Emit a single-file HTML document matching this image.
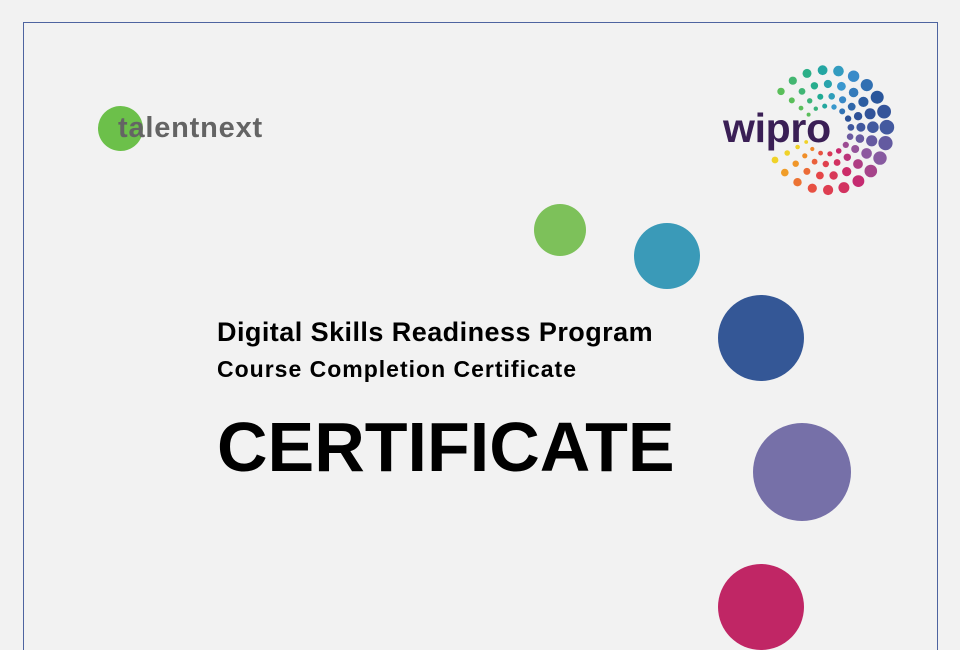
<!DOCTYPE html>
<html><head><meta charset="utf-8"><style>
html,body{margin:0;padding:0;width:960px;height:650px;overflow:hidden}
body{background:#f2f2f2;position:relative;font-family:"Liberation Sans",sans-serif}
.frame{position:absolute;left:23px;top:22px;width:915px;height:640px;border:1.5px solid #4e64a0;box-sizing:border-box}
.t{position:absolute;left:217px;font-weight:bold;color:#000;white-space:nowrap;line-height:1}
.c{position:absolute;border-radius:50%}
</style></head><body>
<div class="frame"></div>
<div class="c" style="left:98px;top:106px;width:45px;height:45px;background:#6cc04a"></div>
<div style="position:absolute;left:118px;top:114px;font-size:29px;font-weight:bold;color:#646464;letter-spacing:0.8px;line-height:1">talentnext</div>
<svg id="w" width="960" height="650" style="position:absolute;left:0;top:0"></svg>
<div style="position:absolute;left:723px;top:108px;font-size:41px;font-weight:bold;color:#3a1f55;line-height:1;letter-spacing:-0.3px">wipro</div>
<div class="c" style="left:534px;top:204px;width:52px;height:52px;background:#7dc15a"></div>
<div class="c" style="left:634px;top:223px;width:66px;height:66px;background:#3a9ab8"></div>
<div class="c" style="left:718px;top:295px;width:86px;height:86px;background:#345796"></div>
<div class="c" style="left:753px;top:423px;width:98px;height:98px;background:#7670a8"></div>
<div class="c" style="left:718px;top:564px;width:86px;height:86px;background:#c02665"></div>
<div class="t" style="top:319px;font-size:27px;letter-spacing:0.45px">Digital Skills Readiness Program</div>
<div class="t" style="top:358px;font-size:23px;letter-spacing:1px">Course Completion Certificate</div>
<div class="t" style="top:412px;font-size:70px">CERTIFICATE</div>
<script>
var s=document.getElementById('w'),cx=827,cy=130;
var rings=[[60,20,1.1],[46,18,0.85],[34,16,0.62],[24,14,0.45]];
var stops=[[140,[90,190,90]],[100,[30,170,150]],[70,[60,150,210]],[30,[40,80,150]],[0,[70,90,160]],[-30,[140,90,160]],[-60,[200,40,110]],[-100,[230,70,70]],[-130,[240,140,40]],[-150,[240,210,40]]];
function col(a){for(var i=0;i<stops.length-1;i++){var A=stops[i],B=stops[i+1];if(a<=A[0]&&a>=B[0]){var t=(A[0]-a)/(A[0]-B[0]);return 'rgb('+A[1].map(function(v,k){return Math.round(v+(B[1][k]-v)*t)}).join(',')+')';}}return 'rgb(240,210,40)';}
var h='';
rings.forEach(function(r){for(var i=0;i<r[1];i++){var a=140-290*i/(r[1]-1);var rad=a*Math.PI/180;var x=cx+r[0]*Math.cos(rad),y=cy-r[0]*Math.sin(rad);var sz=(2.4+3.6*(1-Math.abs(a)/150))*r[2]+0.8;h+='<circle cx="'+x.toFixed(1)+'" cy="'+y.toFixed(1)+'" r="'+sz.toFixed(1)+'" fill="'+col(a)+'"/>';}});
s.innerHTML=h;
</script>
</body></html>
